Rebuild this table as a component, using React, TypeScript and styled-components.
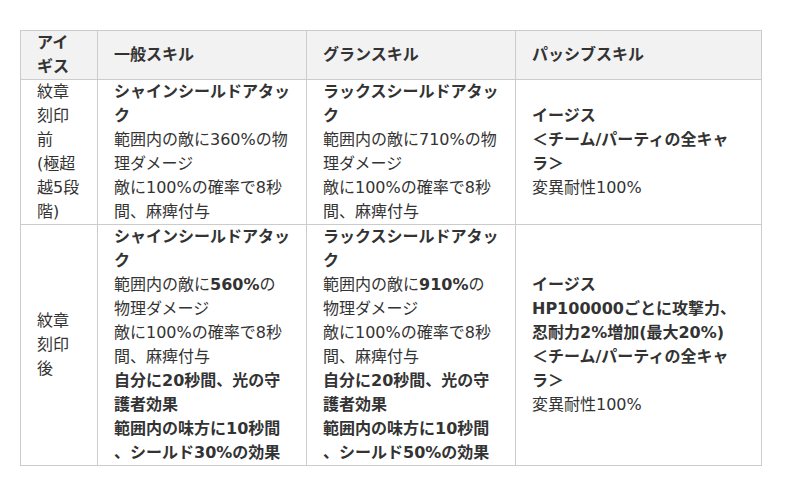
import styled, {createGlobalStyle} from "styled-components";

const GlobalStyle = createGlobalStyle`
  body {
    margin: 0;
    background: #fff;
    font-family: "DejaVu Sans", "Noto Sans CJK JP", sans-serif;
    color: #333;
  }
`

const Page = styled.div`
  padding: 30px 0 0 20px;
`

const Table = styled.table`
  border-collapse: collapse;
  table-layout: fixed;
  width: 741px;
  font-size: 16px;
  line-height: 24px;
`

const Head = styled.th`
  background: #f2f2f2;
  border: 1px solid #ccc;
  padding: 0 16px;
  text-align: left;
  font-weight: bold;
  vertical-align: middle;
`

const Cell = styled.td<{ $padRight?: number }>`
  border: 1px solid #ccc;
  padding: 0 ${props => props.$padRight ?? 16}px 0 16px;
  vertical-align: middle;
`

const Line = styled.div<{ $bold?: boolean }>`
  font-weight: ${props => props.$bold ? 'bold' : 'normal'};
`

const B = styled.b`
  font-weight: bold;
`

const App = () => {
  return (
    <Page>
      <GlobalStyle />
      <Table>
        <colgroup>
          <col style={{width: 77}} />
          <col style={{width: 209}} />
          <col style={{width: 209}} />
          <col style={{width: 246}} />
        </colgroup>
        <thead>
          <tr>
            <Head>アイギス</Head>
            <Head>一般スキル</Head>
            <Head>グランスキル</Head>
            <Head>パッシブスキル</Head>
          </tr>
        </thead>
        <tbody>
          <tr>
            <Cell>紋章刻印前<br />(極超越5段階)</Cell>
            <Cell>
              <Line $bold>シャインシールドアタック</Line>
              <Line>範囲内の敵に360%の物理ダメージ</Line>
              <Line>敵に100%の確率で8秒間、麻痺付与</Line>
            </Cell>
            <Cell>
              <Line $bold>ラックスシールドアタック</Line>
              <Line>範囲内の敵に710%の物理ダメージ</Line>
              <Line>敵に100%の確率で8秒間、麻痺付与</Line>
            </Cell>
            <Cell $padRight={20}>
              <Line $bold>イージス</Line>
              <Line $bold>＜チーム/パーティの全キャラ＞</Line>
              <Line>変異耐性100%</Line>
            </Cell>
          </tr>
          <tr>
            <Cell>紋章刻印後</Cell>
            <Cell>
              <Line $bold>シャインシールドアタック</Line>
              <Line>範囲内の敵に<B>560%</B>の物理ダメージ</Line>
              <Line>敵に100%の確率で8秒間、麻痺付与</Line>
              <Line $bold>自分に20秒間、光の守護者効果</Line>
              <Line $bold>範囲内の味方に10秒間<br />、シールド30%の効果</Line>
            </Cell>
            <Cell>
              <Line $bold>ラックスシールドアタック</Line>
              <Line>範囲内の敵に<B>910%</B>の物理ダメージ</Line>
              <Line>敵に100%の確率で8秒間、麻痺付与</Line>
              <Line $bold>自分に20秒間、光の守護者効果</Line>
              <Line $bold>範囲内の味方に10秒間<br />、シールド50%の効果</Line>
            </Cell>
            <Cell $padRight={20}>
              <Line $bold>イージス</Line>
              <Line $bold>HP100000ごとに攻撃力、忍耐力2%増加(最大20%)</Line>
              <Line $bold>＜チーム/パーティの全キャラ＞</Line>
              <Line>変異耐性100%</Line>
            </Cell>
          </tr>
        </tbody>
      </Table>
    </Page>
  );
}

export default App;
